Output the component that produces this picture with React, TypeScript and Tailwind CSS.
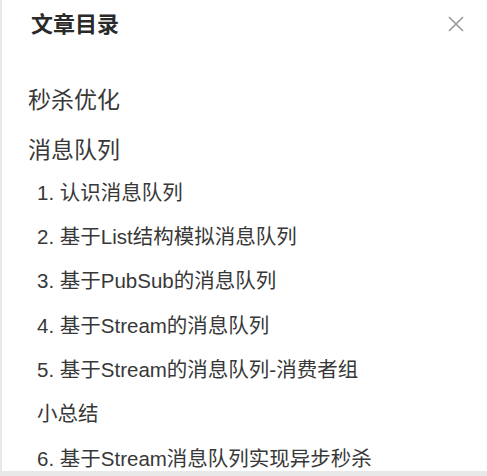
import React from "react";

const topItems = ["秒杀优化", "消息队列"];

const subItems = [
  "1. 认识消息队列",
  "2. 基于List结构模拟消息队列",
  "3. 基于PubSub的消息队列",
  "4. 基于Stream的消息队列",
  "5. 基于Stream的消息队列-消费者组",
  "小总结",
  "6. 基于Stream消息队列实现异步秒杀",
];

function CloseIcon() {
  return (
    <svg width="16" height="16" viewBox="0 0 16 16" fill="none" stroke="#999" strokeWidth="1.6">
      <path d="M1 1 L15 15 M15 1 L1 15" />
    </svg>
  );
}

export default function App() {
  return (
    <div
      className="h-screen w-full overflow-hidden bg-[#e8e8e8] pb-[5px] pl-[2px]"
      style={{ fontFamily: '"Liberation Sans", "Noto Sans CJK SC", sans-serif' }}
    >
      <div className="h-full w-full bg-white text-[#383838]">
        {/* drawer header */}
        <div className="flex h-[48px] items-center justify-between pl-[29px] pr-[23px]">
          <h2 className="text-[22px] font-bold text-[#2a2a2a]">文章目录</h2>
          <button className="flex items-center">
            <CloseIcon />
          </button>
        </div>

        <div className="pt-[27px]">
          {topItems.map((t) => (
            <div key={t} className="flex h-[50px] items-center pl-[26px] text-[23px]">
              {t}
            </div>
          ))}
          <div className="-mt-[4px]">
            {subItems.map((t) => (
              <div key={t} className="flex h-[44.33px] items-center pl-[35px] text-[20.5px]">
                {t}
              </div>
            ))}
          </div>
        </div>
      </div>
    </div>
  );
}
